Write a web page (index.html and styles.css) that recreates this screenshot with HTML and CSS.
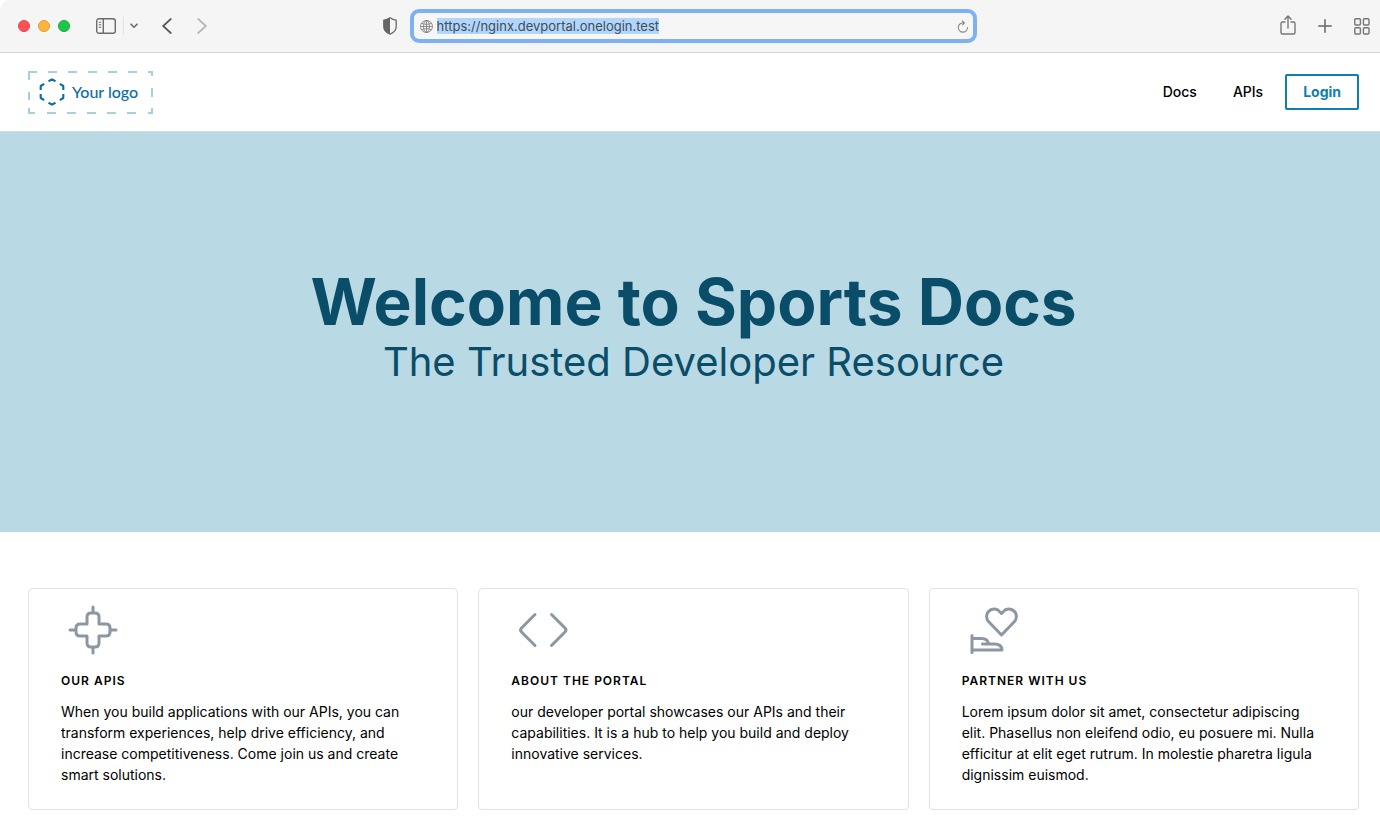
FILE: index.html
```html
<!DOCTYPE html>
<html lang="en">
<head>
<meta charset="utf-8">
<meta name="viewport" content="width=device-width, initial-scale=1">
<title>Sports Docs</title>
<link rel="stylesheet" href="styles.css">
</head>
<body>
<div class="toolbar">
  <div class="toolbar-left">
    <div class="lights"><span class="light red"></span><span class="light amber"></span><span class="light green"></span></div>
    <button class="tool sidebar" aria-label="Show sidebar"><svg width="20" height="16" viewBox="0 0 20 16" fill="none" stroke="#6b6b6b" stroke-width="1.4"><rect x=".7" y=".7" width="18.6" height="14.6" rx="2.3"/><path d="M7.3 1v14"/><path d="M2.8 4.2h2.4M2.8 6.7h2.4M2.8 9.2h2.4" stroke-width="1.1"/></svg></button>
    <span class="divider"></span>
    <button class="tool more" aria-label="Tab groups"><svg width="8" height="6" viewBox="0 0 8 6" fill="none" stroke="#6b6b6b" stroke-width="1.6" stroke-linecap="round" stroke-linejoin="round"><path d="M1 1.2l3 3 3-3"/></svg></button>
    <button class="tool back" aria-label="Back"><svg width="10" height="16" viewBox="0 0 10 16" fill="none" stroke="#5a5a5a" stroke-width="1.7" stroke-linecap="round" stroke-linejoin="round"><path d="M8.800 1L1.200 8l7.600 7"/></svg></button>
    <button class="tool forward" aria-label="Forward" disabled><svg width="10" height="16" viewBox="0 0 10 16" fill="none" stroke="#b7b7b7" stroke-width="1.7" stroke-linecap="round" stroke-linejoin="round"><path d="M1.200 1l7.600 7-7.600 7"/></svg></button>
  </div>
  <div class="toolbar-center">
    <button class="tool" aria-label="Privacy report"><svg width="14" height="18" viewBox="0 0 14 18"><path d="M7 .8C5.200 2.200 3 3 .8 3.200v6.300c0 3.700 2.500 6.300 6.200 7.700 3.700-1.400 6.200-4 6.200-7.700V3.200C11 3 8.800 2.200 7 .8z" fill="none" stroke="#666" stroke-width="1.300" stroke-linejoin="round"/><path d="M7 .8C5.200 2.200 3 3 .8 3.200v6.300c0 3.700 2.500 6.300 6.200 7.700z" fill="#666"/></svg></button>
    <div class="address">
      <svg width="13" height="13" viewBox="0 0 13 13" fill="none" stroke="#777" stroke-width=".8"><circle cx="6.500" cy="6.500" r="6"/><ellipse cx="6.500" cy="6.500" rx="3" ry="6"/><path d="M6.500.5v12M.5 6.500h12M1.500 3.300c2.800 1.400 7.200 1.400 10 0M1.500 9.700c2.800-1.400 7.200-1.400 10 0"/></svg>
      <input class="url" type="text" aria-label="Address" value="https://nginx.devportal.onelogin.test">
      <button class="tool reload" aria-label="Reload"><svg width="12" height="13" viewBox="0 0 12 13" fill="none" stroke="#888" stroke-width="1.100" stroke-linecap="round" stroke-linejoin="round"><path d="M10.500 7.500a4.600 4.600 0 1 1-4.600-4.600h1.400M5.400 1l2 1.900-1.800 1.900"/></svg></button>
    </div>
  </div>
  <div class="toolbar-right">
    <button class="tool share" aria-label="Share"><svg width="16" height="20" viewBox="0 0 16 20" fill="none" stroke="#777" stroke-width="1.400" stroke-linecap="round" stroke-linejoin="round"><path d="M5 7H2.500C1.600 7 1 7.600 1 8.500v9c0 .9.600 1.500 1.500 1.500h11c.9 0 1.500-.6 1.500-1.500v-9c0-.9-.6-1.500-1.500-1.500H11M8 13V1.200M4.900 4.200L8 1l3.100 3.200"/></svg></button>
    <button class="tool" aria-label="New tab"><svg width="14" height="14" viewBox="0 0 14 14" stroke="#666" stroke-width="1.500" stroke-linecap="round"><path d="M7 .8v12.400M.8 7h12.400"/></svg></button>
    <button class="tool" aria-label="Tab overview"><svg width="16" height="17" viewBox="0 0 16 17" fill="none" stroke="#777" stroke-width="1.400"><rect x=".8" y=".8" width="5.600" height="6.200" rx="1"/><rect x="9.400" y=".8" width="5.600" height="6.200" rx="1"/><rect x=".8" y="9.800" width="5.600" height="6.200" rx="1"/><rect x="9.400" y="9.800" width="5.600" height="6.200" rx="1"/></svg></button>
  </div>
</div>
<header class="header">
  <a class="logo" href="#">
    <svg class="logo-frame" viewBox="0 0 125 43" fill="none" stroke="#a6cfe0" stroke-width="2"><path d="M0 1h9M20 1h9M40 1h9M60 1h9M80 1h9M100 1h9M120 1h5M0 42h7M19 42h9M39 42h9M59 42h9M79 42h9M99 42h9M120 42h5M1 0v9M1 21v8M1 37v6M124 0v5M124 17v9M124 37v6"/></svg>
    <svg width="26" height="28" viewBox="0 0 26 28" fill="none" stroke="#0b6fa4" stroke-width="2.100" stroke-linecap="butt" stroke-linejoin="round"><path d="M9.500 3.200L13 1.400l3.500 1.800M9.500 24.800l3.500 1.800 3.500-1.800M1.700 12V8l3.500-2.200M24.300 12V8l-3.500-2.200M1.700 16v4l3.500 2.200M24.300 16v4l-3.500 2.200"/></svg>
    <span>Your logo</span>
  </a>
  <nav class="nav"><a href="#">Docs</a><a href="#">APIs</a><button class="login">Login</button></nav>
</header>
<main>
  <section class="hero"><h1>Welcome to Sports Docs</h1><p>The Trusted Developer Resource</p></section>
  <section class="cards">
    <article class="card">
      <svg class="icon" viewBox="0 0 64 64"><path d="M26 26v-7q0-4 4-4h4q4 0 4 4v7h7q4 0 4 4v4q0 4-4 4h-7v7q0 4-4 4h-4q-4 0-4-4v-7h-7q-4 0-4-4v-4q0-4 4-4zM32 14V9M32 50v5M14 32H9M50 32h5"/></svg>
      <h2>Our APIs</h2>
      <p>When you build applications with our APIs, you can transform experiences, help drive efficiency, and increase competitiveness. Come join us and create smart solutions.</p>
    </article>
    <article class="card">
      <svg class="icon" viewBox="0 0 64 64"><path d="M24 16.500L10.500 30q-2 2 0 4L24 47.500M40.500 16.500L54 30q2 2 0 4L40.500 47.500"/></svg>
      <h2>About the portal</h2>
      <p>our developer portal showcases our APIs and their capabilities. It is a hub to help you build and deploy innovative services.</p>
    </article>
    <article class="card">
      <svg class="icon" viewBox="0 0 64 64"><path d="M39.500 37L26.500 23.500c-3-3.500-2-8.500.5-10.500 3.500-3 8.500-2.500 11 1l1.500 1.500 1.500-1.500c2.500-3.500 7.500-4 11-1 2.500 2 3.500 7 .5 10.500zM10 37.500v17M10 40.500H19.500q6 0 7 5M20.500 46h12q7 0 7.500 6H10"/></svg>
      <h2>Partner with us</h2>
      <p>Lorem ipsum dolor sit amet, consectetur adipiscing elit. Phasellus non eleifend odio, eu posuere mi. Nulla efficitur at elit eget rutrum. In molestie pharetra ligula dignissim euismod.</p>
    </article>
  </section>
</main>
</body>
</html>
```
FILE: styles.css
```css
* { box-sizing: border-box; }
body { margin: 0; background: #fff; color: #000; font-family: Inter, "Liberation Sans", sans-serif; font-size: 14px; }
h1, h2, p { margin: 0; }
a { color: inherit; text-decoration: none; }
svg { display: block; flex: none; }

.toolbar { display: grid; grid-template-columns: 1fr auto 1fr; align-items: center; height: 53px; background: #f5f5f5; border-bottom: 1px solid #d4d4d4; border-top-left-radius: 10px; }
.tool { display: flex; align-items: center; padding: 0; border: 0; background: none; }
.toolbar-left { display: flex; align-items: center; padding-left: 18px; }
.lights { display: flex; gap: 8px; }
.light { width: 12px; height: 12px; border-radius: 50%; border: 1px solid #e2444c; background: #ff5257; }
.light.amber { border-color: #e09f36; background: #fdb43f; }
.light.green { border-color: #12ac35; background: #1bc84a; }
.sidebar { margin-left: 26px; }
.divider { width: 1px; height: 18px; margin-left: 7px; background: #e2e2e2; }
.more { margin-left: 6px; }
.back { margin-left: 24px; }
.forward { margin-left: 25px; }
.toolbar-center { display: flex; align-items: center; gap: 13px; padding-right: 20px; }
.address { display: flex; align-items: center; gap: 4px; width: calc(41vw + 2px); height: 34px; padding: 0 4px 0 6px; border: 4px solid #7db1f3; border-radius: 9px; background: #f6f6f6; }
.url { field-sizing: content; height: 16px; padding: 0; border: 0; outline: 0; background: #b1d6fd; color: #454b52; font: 13px/16px Inter, sans-serif; }
.reload { margin-left: auto; }
.toolbar-right { display: flex; align-items: center; justify-content: flex-end; gap: 22px; padding-right: 10px; }
.share { padding-bottom: 2px; }

.header { display: flex; align-items: center; justify-content: space-between; height: 79px; padding: 0 21px 0 28px; border-bottom: 1px solid #cfdde3; }
.logo { position: relative; display: flex; align-items: center; gap: 7px; width: 125px; height: 43px; padding-left: 11px; color: #0b6fa4; font: 500 16px/20px Lato, sans-serif; }
.logo-frame { position: absolute; inset: 0; }
.nav { display: flex; align-items: center; line-height: 16px; font-weight: 500; }
.nav a + a { margin-left: 36px; }
.login { height: 36px; margin-left: 22px; padding: 0 16px; border: 2px solid #0f7fb2; border-radius: 2px; background: #fff; color: #0f7fb2; font: 700 14px/20px Inter, sans-serif; }

.hero { display: flex; flex-direction: column; align-items: center; justify-content: center; min-height: 400px; padding: 0 21px 12px 28px; background: #b9d9e5; color: #0a4d69; text-align: center; }
.hero h1 { font-size: 64px; line-height: 72px; font-weight: 700; font-optical-sizing: none; }
.hero p { font-size: 40px; line-height: 48px; font-weight: 400; }

.cards { display: grid; grid-template-columns: repeat(3, 1fr); gap: 20px; padding: 56px 21px 17px 28px; }
.card { padding: 9px 32px 24px; border: 1px solid #dfe2e6; border-radius: 4px; }
.icon { width: 64px; height: 64px; fill: none; stroke: #8c97a3; stroke-width: 3; stroke-linecap: round; stroke-linejoin: round; }
.card h2 { margin: 10px 0 11px; font-size: 12px; line-height: 18px; font-weight: 600; letter-spacing: 1px; text-transform: uppercase; }
.card p { line-height: 21px; }
```
